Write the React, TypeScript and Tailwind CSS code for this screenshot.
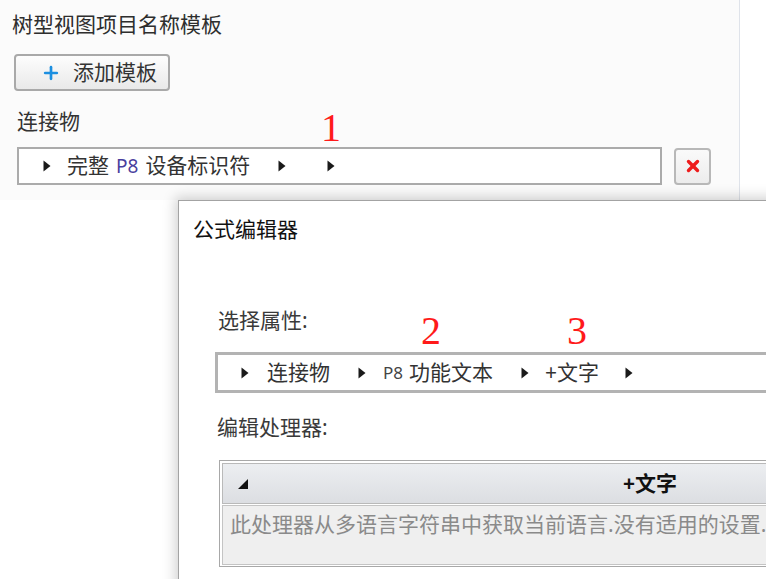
import { Plus, X } from 'lucide-react'

const font = { fontFamily: '"Noto Sans", "Noto Sans CJK SC", sans-serif' }

function Arrow({ className = '' }: { className?: string }) {
  return (
    <svg width="8" height="12" viewBox="0 0 8 12" className={`shrink-0 ${className}`}>
      <path d="M0.5 0.5 L7.5 6 L0.5 11.5 Z" fill="#1a1a1a" />
    </svg>
  )
}

function RedNum({ n, className }: { n: string; className: string }) {
  return (
    <span
      className={`absolute text-[40px] leading-none text-[#ff1a1a] ${className}`}
      style={{ fontFamily: '"Liberation Serif", serif' }}
    >
      {n}
    </span>
  )
}

function TemplatePanel() {
  return (
    <div className="relative flex h-[200px] bg-[#fbfbfb]">
      <div className="flex w-[740px] flex-col border-r border-[#dfe3ea]">
        <div className="ml-[12px] mt-[10px] h-[28px] text-[21px] leading-[28px] text-[#2e2e2e]">树型视图项目名称模板</div>

        <button className="ml-[14px] mt-[16px] flex h-[37px] w-[156px] items-center rounded-[4px] border-2 border-[#a9a9a9] bg-gradient-to-b from-[#fdfdfd] to-[#e9e9e9] text-[21px] text-[#333]">
          <Plus className="ml-[25px] h-[20px] w-[20px] text-[#1c8fe0]" strokeWidth={3.2} />
          <span className="ml-[12px] leading-none">添加模板</span>
        </button>

        <div className="ml-[17px] mt-[16px] h-[28px] text-[21px] leading-[28px] text-[#333]">连接物</div>

        <div className="ml-[17px] mt-[12px] flex items-center gap-[12px]">
          <div className="flex h-[38px] w-[645px] items-center border-2 border-[#ababab] bg-white text-[21px] text-[#333]">
            <Arrow className="ml-[24px]" />
            <span className="ml-[16px]">完整</span>
            <span className="ml-[7px] text-[19px] text-[#4a3f9e]">P8</span>
            <span className="ml-[7px]">设备标识符</span>
            <Arrow className="ml-[28px]" />
            <Arrow className="ml-[41px]" />
          </div>
          <button className="flex h-[37px] w-[37px] items-center justify-center rounded-[4px] border-2 border-[#b8b8b8] bg-gradient-to-b from-[#fafafa] to-[#ececec]">
            <X className="h-[18px] w-[18px] text-[#ee1c1c]" strokeWidth={4.5} />
          </button>
        </div>
      </div>
      <div className="flex-1 bg-white" />
      <RedNum n="1" className="left-[321px] top-[108px]" />
    </div>
  )
}

function FormulaDialog() {
  return (
    <div className="absolute left-[178px] top-[200px] h-[400px] w-[620px] border border-[#a3a3a3] bg-white shadow-[-3px_-3px_12px_rgba(0,0,0,0.18)]">
      <div className="ml-[14px] mt-[14px] h-[28px] text-[21px] leading-[28px] text-[#111]">公式编辑器</div>

      <div className="ml-[39px] mt-[63px] h-[28px] text-[21px] leading-[28px] text-[#3a3a3a]">选择属性:</div>

      <div className="ml-[36px] mt-[18px] flex h-[41px] items-center border-y-[3px] border-l-[3px] border-[#b3b3b3] bg-white text-[21px] text-[#333]">
        <Arrow className="ml-[23px]" />
        <span className="ml-[18px]">连接物</span>
        <Arrow className="ml-[28px]" />
        <span className="ml-[17px] text-[17px] text-[#444]">P8</span>
        <span className="ml-[6px]">功能文本</span>
        <Arrow className="ml-[28px]" />
        <span className="ml-[16px]">+文字</span>
        <Arrow className="ml-[26px]" />
      </div>

      <div className="ml-[38px] mt-[20px] h-[28px] text-[21px] leading-[28px] text-[#3a3a3a]">编辑处理器:</div>

      <div className="ml-[40px] mt-[19px] h-[107px] border border-[#a8a8a8] p-[2px]">
        <div className="flex h-[41px] items-center border border-[#b9b9b9] bg-gradient-to-b from-[#eceef1] to-[#dcdee2]">
          <svg width="10" height="10" viewBox="0 0 10 10" className="ml-[15px]">
            <path d="M10 0 L10 10 L0 10 Z" fill="#111" />
          </svg>
          <span className="ml-[375px] text-[21px] font-bold text-[#111]">+文字</span>
        </div>
        <div className="mt-[1px] h-[60px] border border-[#c4c4c4] bg-[#efefef] pl-[7px] pt-[4px] text-[21px] leading-[28px] text-[#8a8a8a]">
          此处理器从多语言字符串中获取当前语言.没有适用的设置.
        </div>
      </div>

      <RedNum n="2" className="left-[242px] top-[110px]" />
      <RedNum n="3" className="left-[388px] top-[110px]" />
    </div>
  )
}

export default function App() {
  return (
    <div className="relative h-[579px] w-[766px] overflow-hidden bg-white" style={font}>
      <TemplatePanel />
      <FormulaDialog />
    </div>
  )
}
